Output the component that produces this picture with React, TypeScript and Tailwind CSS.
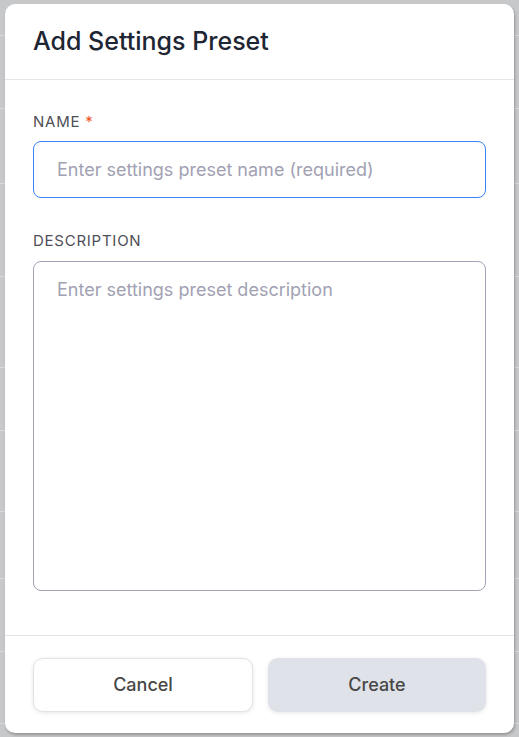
import React from 'react';

const rows = [35, 108, 183, 276, 367, 430, 511, 578, 651, 723];

const App: React.FC = () => {
  return (
    <div
      className="relative h-[737px] w-[519px] overflow-hidden bg-[#c7c8ca]"
      style={{ fontFamily: 'Inter, "Noto Sans", sans-serif' }}
    >
      {/* page behind the overlay */}
      <div className="flex flex-col">
        {rows.map((y, i) => (
          <div
            key={i}
            className="h-px w-full bg-[#d9dadc]"
            style={{ marginTop: i === 0 ? y : y - rows[i - 1] - 1 }}
          />
        ))}
      </div>

      {/* dialog */}
      <div className="absolute left-[5px] top-[4px] flex h-[729px] w-[509px] flex-col rounded-[10px] bg-white shadow-[1px_2px_3px_rgba(0,0,0,0.25)]">
        <div className="border-b border-[#e4e5e9] px-[28px] py-[23px]">
          <h2 className="text-[25px] font-medium leading-[29px] text-[#1e2533]">Add Settings Preset</h2>
        </div>

        <div className="flex flex-1 flex-col px-7 pt-8">
          <label className="mb-[9px] text-[15px] leading-5 tracking-[0.05em] text-[#4f4f57]">
            NAME <span className="text-[#f0541e]">*</span>
          </label>
          <input
            className="h-[57px] w-full rounded-lg border border-[#3b82f6] px-[23px] text-lg text-[#1e2533] outline-none placeholder:text-[#a2a1b3]"
            placeholder="Enter settings preset name (required)"
          />

          <label className="mb-[10px] mt-[33px] text-[15px] leading-5 tracking-[0.05em] text-[#4f4f57]">DESCRIPTION</label>
          <textarea
            className="h-[330px] w-full resize-none rounded-lg border border-[#a4a2b6] px-[23px] py-[14px] text-lg leading-7 text-[#1e2533] outline-none placeholder:text-[#a2a1b3]"
            placeholder="Enter settings preset description"
          />
        </div>

        <div className="flex gap-[15px] border-t border-[#e4e5e9] px-7 pb-[21px] pt-[22px]">
          <button className="h-[54px] flex-1 rounded-[10px] border border-[#e2e3e8] bg-white text-lg font-medium text-[#474747] shadow-[0_1px_4px_rgba(0,0,0,0.1)]">
            Cancel
          </button>
          <button className="h-[54px] flex-1 rounded-[10px] bg-[#e0e2e9] text-lg font-medium text-[#474747] shadow-[0_1px_4px_rgba(0,0,0,0.1)]">
            Create
          </button>
        </div>
      </div>
    </div>
  );
};

export default App;
